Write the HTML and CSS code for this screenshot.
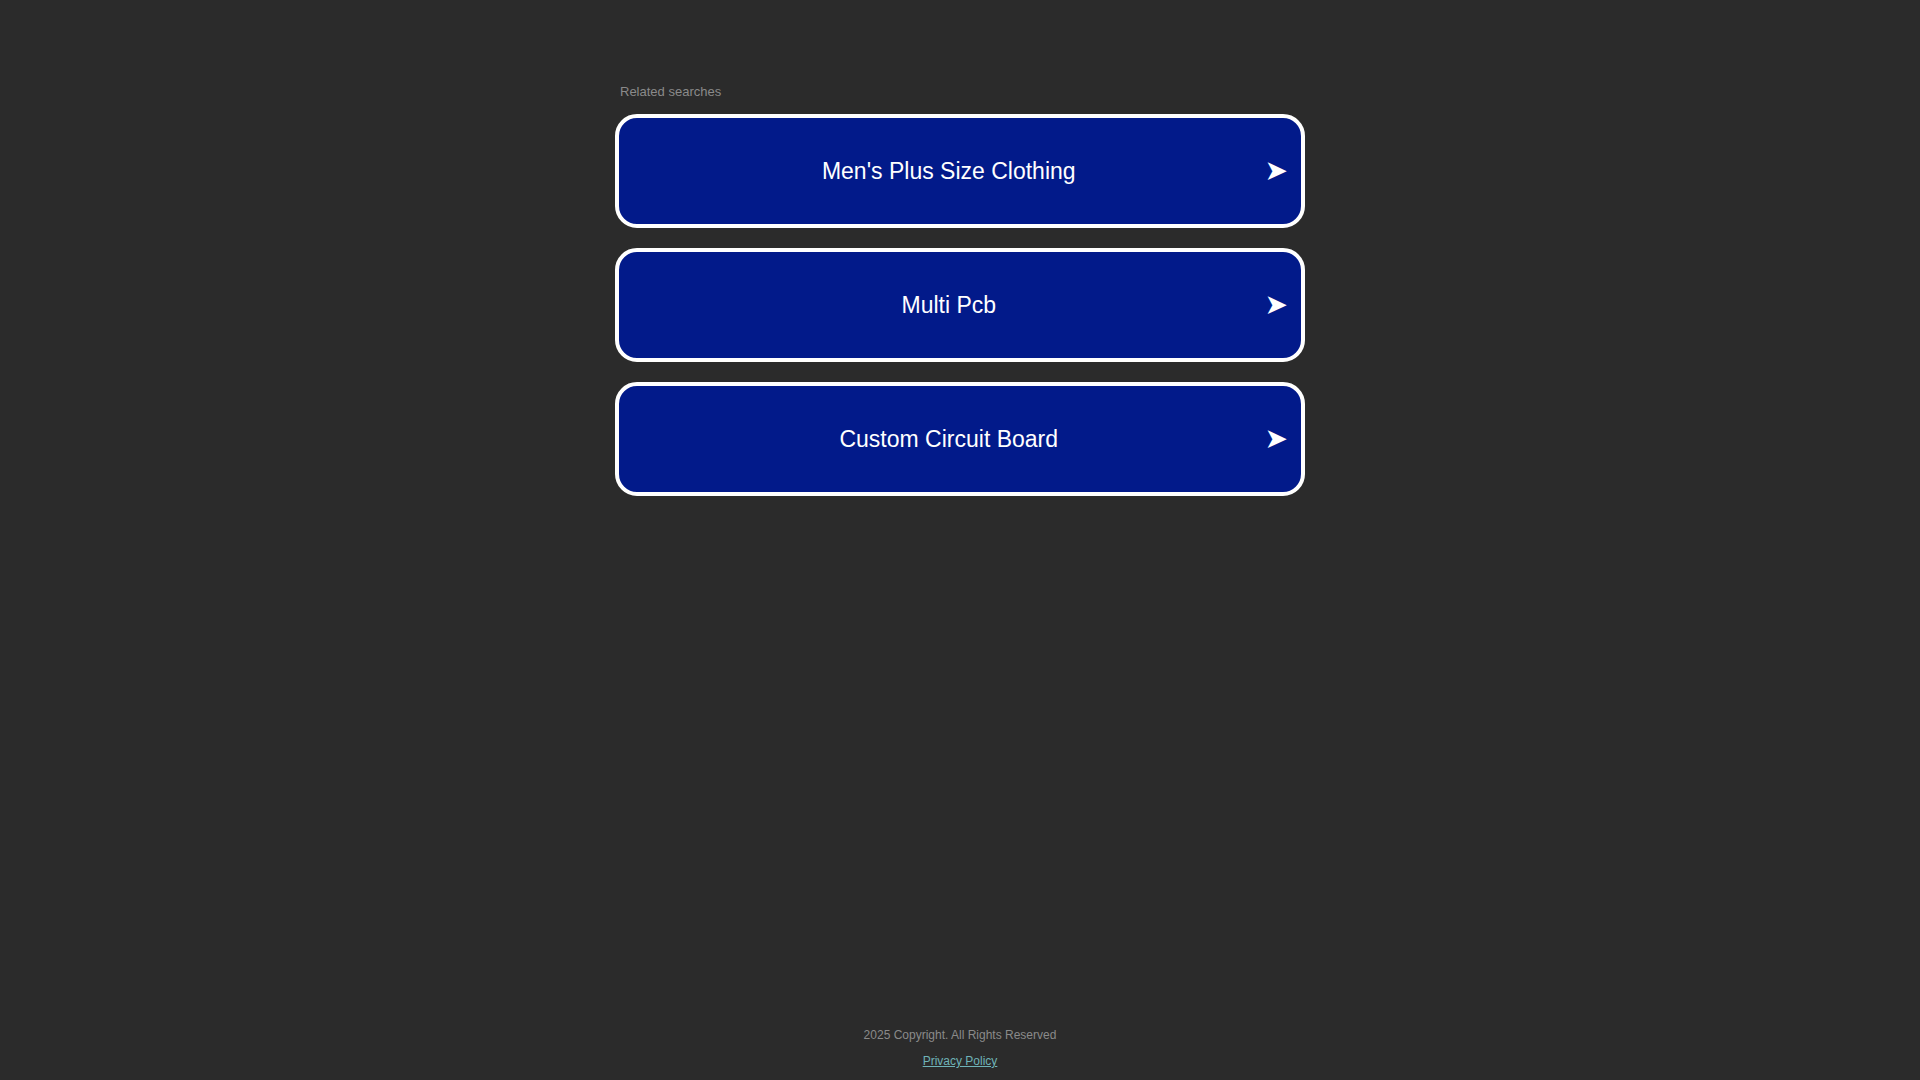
FILE: index.html
```html
<!DOCTYPE html>
<html lang="en">
<head>
    <meta charset="UTF-8">
    <meta name="viewport" content="width=device-width, initial-scale=1.0">
    <title>Related searches</title>
    <link rel="stylesheet" href="styles.css">
</head>
<body>
    <div id="page">
        <div id="container">
            <div id="heading">Related searches</div>

            <div id="links">
                <a class="search-link" href="#">
                    <span class="search-text">Men's Plus Size Clothing</span>
                    <span class="search-arrow">&#10148;</span>
                </a>
                <a class="search-link" href="#">
                    <span class="search-text">Multi Pcb</span>
                    <span class="search-arrow">&#10148;</span>
                </a>
                <a class="search-link" href="#">
                    <span class="search-text">Custom Circuit Board</span>
                    <span class="search-arrow">&#10148;</span>
                </a>
            </div>
        </div>

        <div id="footer">
            <div class="copyright">2025 Copyright. All Rights Reserved</div>
            <a class="privacy" href="#">Privacy Policy</a>
        </div>
    </div>
</body>
</html>
```

FILE: styles.css
```css
body {
    margin: 0;
    background-color: #2b2b2b;
    font-family: "Liberation Sans", Arial, sans-serif;
}

#page {
    display: flex;
    flex-direction: column;
    min-height: 100vh;
}

#container {
    width: 690px;
    margin: 0 auto;
    padding-top: 84px;
}

#heading {
    font-size: 13px;
    line-height: 15px;
    color: #8a8a8a;
    padding-left: 5px;
    margin-bottom: 15px;
}

#links {
    display: flex;
    flex-direction: column;
    gap: 20px;
}

.search-link {
    display: flex;
    align-items: center;
    height: 114px;
    box-sizing: border-box;
    padding: 0 13px 0 14px;
    background-color: #021a8a;
    border: 4px solid #fff;
    border-radius: 22px;
    color: #fff;
    text-decoration: none;
}

.search-text {
    flex: 1;
    text-align: center;
    font-size: 23px;
}

.search-arrow {
    font-family: "DejaVu Sans", sans-serif;
    font-size: 28px;
    line-height: 1;
}

#footer {
    margin-top: auto;
    padding-bottom: 11px;
    text-align: center;
    font-size: 12px;
    line-height: 15px;
}

.copyright {
    color: #8a8a8a;
    margin-bottom: 11px;
}

.privacy {
    color: #6fb3b8;
}
```
